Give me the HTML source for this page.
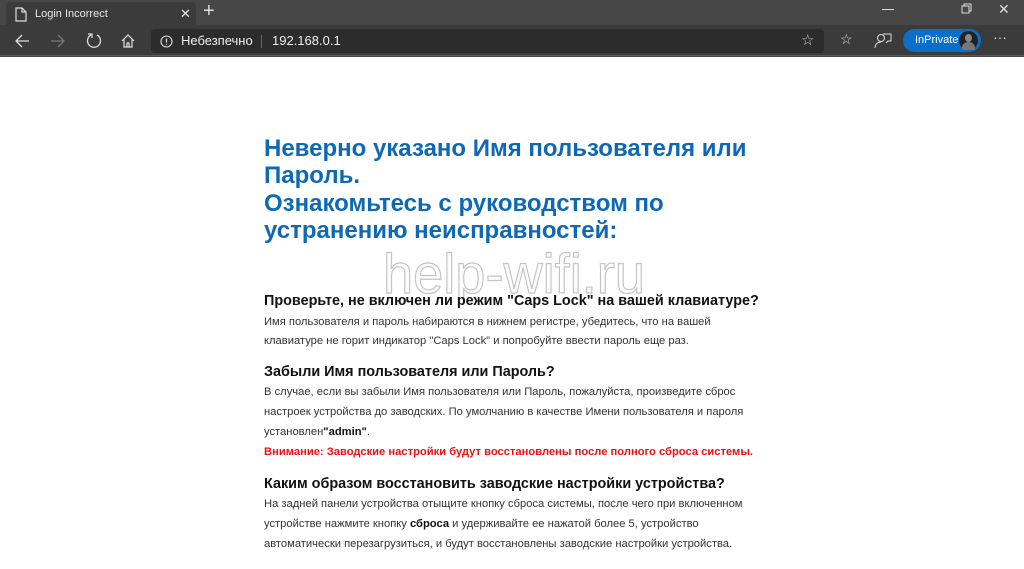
<!DOCTYPE html>
<html><head><meta charset="utf-8"><style>
*{margin:0;padding:0;box-sizing:border-box}
body{width:1024px;height:569px;overflow:hidden;background:#fff;font-family:"Liberation Sans",Arial,sans-serif;position:relative}
.chrome{position:absolute;left:0;top:0;width:1024px;height:57px;background:#474747}
.tab{position:absolute;left:6px;top:2px;width:190px;height:24px;background:#3b3b3b;border-radius:4px 4px 0 0;color:#e8e8e8;font-size:11px}
.bar{position:absolute;left:0;top:25px;width:1024px;height:31px;background:#3b3b3b;border-bottom:1px solid #5a5a5a}
.addr{position:absolute;left:151px;top:4px;width:673px;height:24px;background:#2c2c2c;border-radius:4px;color:#eee;font-size:13px}
.abs{position:absolute;white-space:nowrap}
.t{color:#0e68b4;font-weight:bold;font-size:24px;left:264px}
.h{color:#111;font-weight:bold;font-size:14.4px;left:264px}
.p{color:#333;font-size:11.2px;left:264px}
</style></head><body>
<div class="chrome">
 <div class="tab">
  <svg class="abs" style="left:8px;top:5px" width="14" height="15"><path d="M2 1h6l4 4v9H2z M8 1v4h4" fill="none" stroke="#ddd" stroke-width="1.2"/></svg>
  <span class="abs" style="left:29px;top:6px">Login Incorrect</span>
  <span class="abs" style="left:174px;top:4px;font-size:13px">✕</span>
 </div>
 <span class="abs" style="left:203px;top:0px;color:#ddd;font-size:20px">+</span>
 <div class="abs" style="left:882px;top:9px;width:12px;height:1px;background:#ddd"></div>
 <svg class="abs" style="left:961px;top:3px" width="12" height="12"><rect x="1" y="3" width="7" height="7" fill="none" stroke="#ddd"/><path d="M3 3V1h7v7H8" fill="none" stroke="#ddd"/></svg>
 <span class="abs" style="left:998px;top:1px;color:#ddd;font-size:14px">✕</span>
 <div class="bar">
  <svg class="abs" style="left:14px;top:8px" width="16" height="16"><path d="M2 8h13M8 2L2 8l6 6" fill="none" stroke="#ddd" stroke-width="1.3"/></svg>
  <svg class="abs" style="left:50px;top:8px" width="16" height="16"><path d="M1 8h13M8 2l6 6-6 6" fill="none" stroke="#777" stroke-width="1.3"/></svg>
  <svg class="abs" style="left:85px;top:7px" width="18" height="18"><path d="M6 3A6.5 6.5 0 1 0 12 3" fill="none" stroke="#ddd" stroke-width="1.3"/><path d="M3 2h4v4" fill="none" stroke="#ddd" stroke-width="1.3"/></svg>
  <svg class="abs" style="left:120px;top:8px" width="16" height="16"><path d="M2 8l6-6 6 6M4 6v8h8V6M7 14v-4h2v4" fill="none" stroke="#ddd" stroke-width="1.2"/></svg>
  <div class="addr">
   <svg class="abs" style="left:9px;top:6px" width="13" height="13"><circle cx="6.5" cy="6.5" r="5.5" fill="none" stroke="#ddd" stroke-width="1.1"/><path d="M6.5 3.5v4M6.5 8.8v1" stroke="#ddd" stroke-width="1.2"/></svg>
   <span class="abs" style="left:30px;top:4px">Небезпечно</span>
   <div class="abs" style="left:110px;top:6px;width:1px;height:13px;background:#666"></div>
   <span class="abs" style="left:121px;top:4px">192.168.0.1</span>
   <span class="abs" style="left:650px;top:2px;color:#ccc;font-size:15px">☆</span>
  </div>
  <span class="abs" style="left:840px;top:6px;color:#ddd;font-size:14px">☆</span>
  <svg class="abs" style="left:874px;top:7px" width="18" height="18"><circle cx="7" cy="6" r="3.5" fill="none" stroke="#ddd"/><path d="M1 16c0-4 3-6 6-6M9 2h8v7h-3l-2 2" fill="none" stroke="#ddd"/></svg>
  <div class="abs" style="left:903px;top:4px;width:78px;height:23px;background:#0a6fc8;border-radius:12px;color:#fff;font-size:11px"><span class="abs" style="left:12px;top:5px">InPrivate</span><div class="abs" style="left:56px;top:2px;width:19px;height:19px;border-radius:50%;background:#222"><div class="abs" style="left:6px;top:3px;width:7px;height:8px;border-radius:50%;background:#888"></div><div class="abs" style="left:3px;top:11px;width:13px;height:8px;border-radius:6px 6px 2px 2px;background:#777"></div></div></div>
  <span class="abs" style="left:993px;top:4px;color:#ddd;font-size:14px">···</span>
 </div>
</div>

<div class="abs t" style="top:135px">Неверно указано Имя пользователя или</div>
<div class="abs t" style="top:162px">Пароль.</div>
<div class="abs t" style="top:190px">Ознакомьтесь с руководством по</div>
<div class="abs t" style="top:217px">устранению неисправностей:</div>

<svg class="abs" style="left:378px;top:240px" width="280" height="60"><text x="5" y="53" font-family="Liberation Sans,Arial,sans-serif" font-size="56" textLength="262" lengthAdjust="spacingAndGlyphs" fill="#fdfdfd" stroke="#c4c4c4" stroke-width="1.2">help-wifi.ru</text></svg>

<div class="abs h" style="top:293px">Проверьте, не включен ли режим "Caps Lock" на вашей клавиатуре?</div>
<div class="abs p" style="top:316px">Имя пользователя и пароль набираются в нижнем регистре, убедитесь, что на вашей</div>
<div class="abs p" style="top:335px">клавиатуре не горит индикатор "Caps Lock" и попробуйте ввести пароль еще раз.</div>
<div class="abs h" style="top:364px">Забыли Имя пользователя или Пароль?</div>
<div class="abs p" style="top:386px">В случае, если вы забыли Имя пользователя или Пароль, пожалуйста, произведите сброс</div>
<div class="abs p" style="top:406px">настроек устройства до заводских. По умолчанию в качестве Имени пользователя и пароля</div>
<div class="abs p" style="top:426px">установлен<b style="color:#111">"admin"</b>.</div>
<div class="abs p" style="top:446px;color:#f01010;font-weight:bold;font-size:11.2px">Внимание: Заводские настройки будут восстановлены после полного сброса системы.</div>
<div class="abs h" style="top:476px">Каким образом восстановить заводские настройки устройства?</div>
<div class="abs p" style="top:498px">На задней панели устройства отыщите кнопку сброса системы, после чего при включенном</div>
<div class="abs p" style="top:518px">устройстве нажмите кнопку <b style="color:#111">сброса</b> и удерживайте ее нажатой более 5, устройство</div>
<div class="abs p" style="top:538px">автоматически перезагрузиться, и будут восстановлены заводские настройки устройства.</div>
</body></html>
